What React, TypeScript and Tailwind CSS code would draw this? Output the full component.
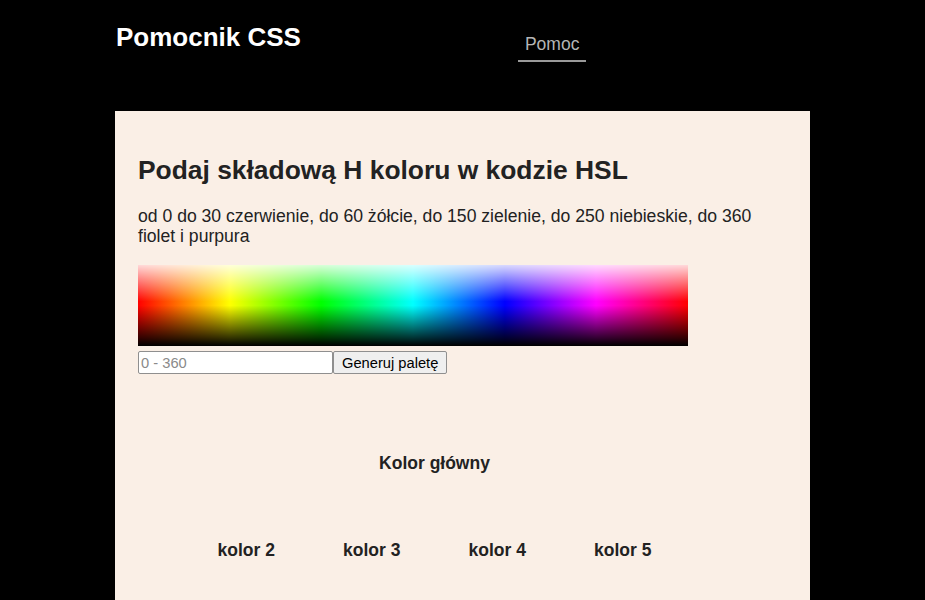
const hueBar =
  "bg-[linear-gradient(to_bottom,rgba(255,255,255,0.85)_0%,rgba(255,255,255,0)_45%,rgba(0,0,0,0)_50%,rgba(0,0,0,1)_100%),linear-gradient(to_right,#f00_0%,#ff0_16.7%,#0f0_33.3%,#0ff_50%,#00f_66.7%,#f0f_83.3%,#f00_100%)]"

const shades = ["kolor 2", "kolor 3", "kolor 4", "kolor 5"]

export default function App() {
  return (
    <div className="min-h-[600px] bg-black font-['Liberation_Sans',Arial,sans-serif]">
      <div className="w-[695px] mx-auto">
        <header className="h-[111px] flex items-start">
          <h1 className="mt-[22px] ml-[1px] text-[26px] leading-[30px] font-bold text-white">
            Pomocnik CSS
          </h1>
          <nav className="ml-[217px] mt-[34px]">
            <a
              href="#"
              className="block px-[7px] pb-[6px] text-[17.5px] leading-[20px] text-[#b5b5b5] border-b-2 border-[#9a9a9a]"
            >
              Pomoc
            </a>
          </nav>
        </header>

        <main className="bg-[#faefe6] min-h-[489px] px-[23px] pt-[44px] text-[#222]">
          <h2 className="text-[26.4px] leading-[30px] font-bold">
            Podaj składową H koloru w kodzie HSL
          </h2>
          <p className="mt-[21px] max-w-[630px] text-[17.6px] leading-[20px] text-[#222]">
            od 0 do 30 czerwienie, do 60 żółcie, do 150 zielenie, do 250 niebieskie, do 360 fiolet i
            purpura
          </p>

          <div className={`mt-[19px] w-[550px] h-[81px] ${hueBar}`} />

          <div className="mt-[5px] flex items-stretch">
            <input
              type="text"
              placeholder="0 - 360"
              className="w-[195px] h-[23px] px-[2px] bg-white text-[14.7px] border border-[#8f8f8f] rounded-[2px] placeholder:text-[#8a8a8a] outline-none"
            />
            <button className="h-[23px] px-[8px] bg-[#efefef] border border-[#8f8f8f] rounded-[2px] text-[14.7px] leading-[18px] text-black">
              Generuj paletę
            </button>
          </div>

          <div className="w-[593px] pt-[79px]">
            <div className="text-center text-[17.5px] leading-[20px] font-bold">Kolor główny</div>
            <div className="mt-[67px] flex justify-center">
              {shades.map((s) => (
                <div key={s} className="w-[125.5px] text-center text-[17.5px] leading-[20px] font-bold">
                  {s}
                </div>
              ))}
            </div>
          </div>
        </main>
      </div>
    </div>
  )
}
